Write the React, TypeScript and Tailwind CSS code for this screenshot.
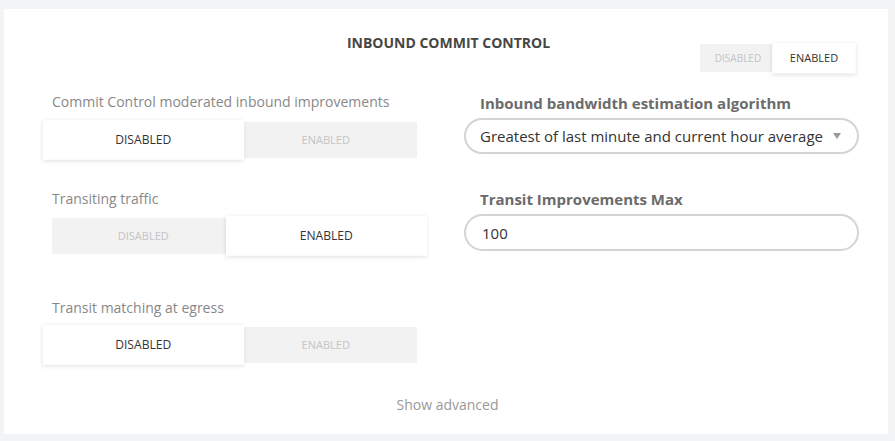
import { useState } from "react";

type ToggleProps = {
  value: boolean;
  onChange: (v: boolean) => void;
  size?: "sm" | "md";
};

function Toggle({ value, onChange, size = "md" }: ToggleProps) {
  const box =
    size === "sm" ? "w-[152px] h-[28px] text-[10px]" : "w-[365px] h-9 text-[11px]";
  const seg = (active: boolean) =>
    `flex-1 flex items-center justify-center uppercase transition ${
      active
        ? "bg-white text-[#333] scale-110 shadow-[0_1px_4px_rgba(0,0,0,0.12)] relative z-10"
        : "text-[#c4c4c4]"
    }`;
  return (
    <div className={`flex bg-[#f2f2f2] ${box}`}>
      <button className={seg(!value)} onClick={() => onChange(false)}>
        Disabled
      </button>
      <button className={seg(value)} onClick={() => onChange(true)}>
        Enabled
      </button>
    </div>
  );
}

export default function App() {
  const [enabled, setEnabled] = useState(true);
  const [moderated, setModerated] = useState(false);
  const [transiting, setTransiting] = useState(true);
  const [matching, setMatching] = useState(false);
  const [max, setMax] = useState("100");

  return (
    <div
      className="min-h-[441px] bg-[#f3f4f6] pt-[9px] pl-[4px] pr-[7px] pb-[9px]"
      style={{ fontFamily: '"Open Sans", sans-serif' }}
    >
      <div className="bg-white pt-[25px] pb-[18px] pl-[48px] pr-[29px]">
        <div className="grid grid-cols-[1fr_auto_1fr]">
          <div />
          <h2 className="text-[14px] leading-[18px] font-bold text-[#464646] -ml-[14px]">
            INBOUND COMMIT CONTROL
          </h2>
          <div className="flex justify-end mt-[10px] mr-[7px]">
            <Toggle value={enabled} onChange={setEnabled} size="sm" />
          </div>
        </div>

        <div className="flex mt-[20px]">
          <div className="w-[365px]">
            <p className="text-[14px] leading-5 text-[#888] mb-[10px]">
              Commit Control moderated inbound improvements
            </p>
            <Toggle value={moderated} onChange={setModerated} />
          </div>
          <div className="ml-[47px] w-[395px] pt-px">
            <p className="text-[15px] leading-5 font-bold text-[#6b6b6b] pl-[16px] mb-[5px]">
              Inbound bandwidth estimation algorithm
            </p>
            <div className="h-[36px] rounded-full border-2 border-[#d4d4d4] flex items-center justify-between pl-[14px] pr-[16px]">
              <span className="text-[15px] text-[#333]">
                Greatest of last minute and current hour average
              </span>
              <svg width="8" height="6" viewBox="0 0 8 6">
                <path d="M0 0h8L4 6z" fill="#9a9a9a" />
              </svg>
            </div>
          </div>
        </div>

        <div className="flex mt-[31px]">
          <div className="w-[365px]">
            <p className="text-[14px] leading-5 text-[#888] mb-[9px]">Transiting traffic</p>
            <Toggle value={transiting} onChange={setTransiting} />
          </div>
          <div className="ml-[47px] w-[395px]">
            <p className="text-[15px] leading-5 font-bold text-[#6b6b6b] pl-[16px] mb-[5px]">
              Transit Improvements Max
            </p>
            <input
              value={max}
              onChange={(e) => setMax(e.target.value)}
              className="w-full h-[37px] rounded-full border-2 border-[#d4d4d4] pl-[16px] text-[15px] text-[#333] outline-none"
            />
          </div>
        </div>

        <div className="mt-[44px] w-[365px]">
          <p className="text-[14px] leading-5 text-[#888] mb-[9px]">
            Transit matching at egress
          </p>
          <Toggle value={matching} onChange={setMatching} />
        </div>

        <div className="mt-[29px] text-center -ml-[16px]">
          <button className="text-[14px] leading-5 text-[#999]">Show advanced</button>
        </div>
      </div>
    </div>
  );
}
